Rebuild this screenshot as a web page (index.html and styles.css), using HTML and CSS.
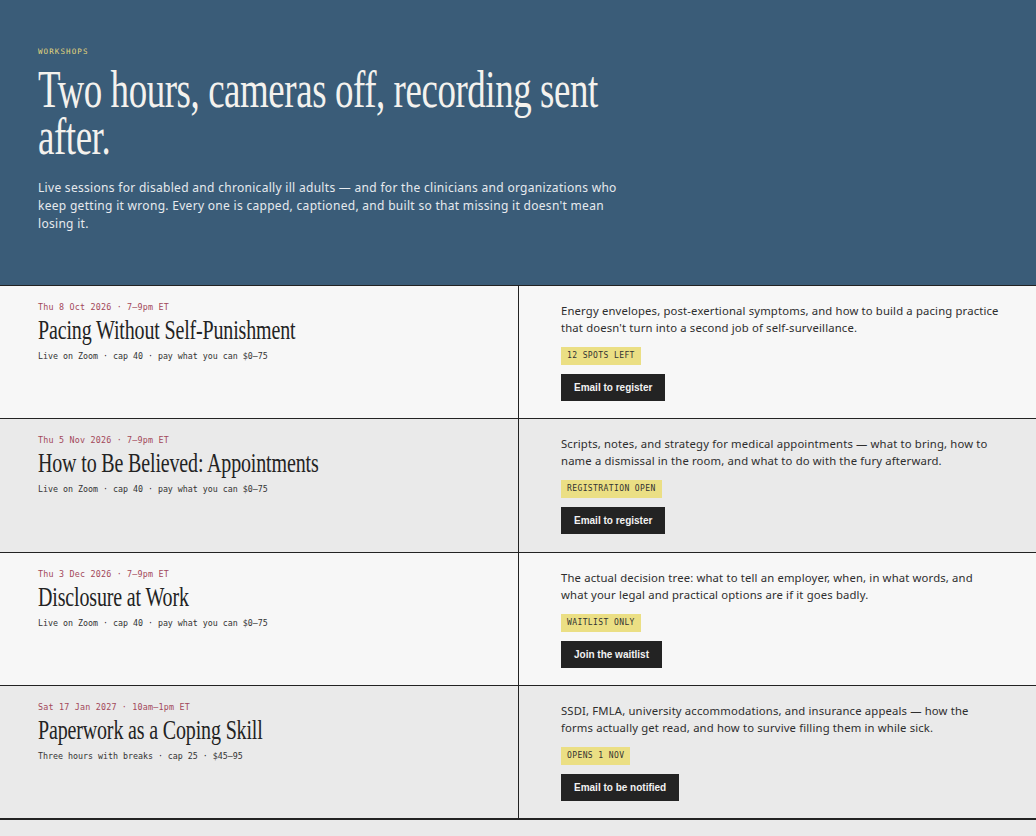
FILE: index.html
```html
<!DOCTYPE html>
<html lang="en">
<head>
<meta charset="utf-8">
<title>Workshops</title>
<link rel="stylesheet" href="styles.css">
</head>
<body>
<header class="hero">
  <div class="hero-inner">
    <p class="eyebrow">WORKSHOPS</p>
    <h1 class="hero-title">Two hours, cameras off, recording sent after.</h1>
    <p class="hero-lede">Live sessions for disabled and chronically ill adults — and for the clinicians and organizations who keep getting it wrong. Every one is capped, captioned, and built so that missing it doesn't mean losing it.</p>
  </div>
</header>
<main class="sessions">
  <article class="session session-light">
    <div class="session-main">
      <p class="session-date">Thu 8 Oct 2026 · 7–9pm ET</p>
      <h2 class="session-title">Pacing Without Self-Punishment</h2>
      <p class="session-meta">Live on Zoom · cap 40 · pay what you can $0–75</p>
    </div>
    <div class="session-detail">
      <p class="session-desc">Energy envelopes, post-exertional symptoms, and how to build a pacing practice that doesn't turn into a second job of self-surveillance.</p>
      <span class="badge">12 SPOTS LEFT</span>
      <a class="button" href="#">Email to register</a>
    </div>
  </article>
  <article class="session session-dark">
    <div class="session-main">
      <p class="session-date">Thu 5 Nov 2026 · 7–9pm ET</p>
      <h2 class="session-title">How to Be Believed: Appointments</h2>
      <p class="session-meta">Live on Zoom · cap 40 · pay what you can $0–75</p>
    </div>
    <div class="session-detail">
      <p class="session-desc">Scripts, notes, and strategy for medical appointments — what to bring, how to name a dismissal in the room, and what to do with the fury afterward.</p>
      <span class="badge">REGISTRATION OPEN</span>
      <a class="button" href="#">Email to register</a>
    </div>
  </article>
  <article class="session session-light">
    <div class="session-main">
      <p class="session-date">Thu 3 Dec 2026 · 7–9pm ET</p>
      <h2 class="session-title">Disclosure at Work</h2>
      <p class="session-meta">Live on Zoom · cap 40 · pay what you can $0–75</p>
    </div>
    <div class="session-detail">
      <p class="session-desc">The actual decision tree: what to tell an employer, when, in what words, and what your legal and practical options are if it goes badly.</p>
      <span class="badge">WAITLIST ONLY</span>
      <a class="button" href="#">Join the waitlist</a>
    </div>
  </article>
  <article class="session session-dark">
    <div class="session-main">
      <p class="session-date">Sat 17 Jan 2027 · 10am–1pm ET</p>
      <h2 class="session-title">Paperwork as a Coping Skill</h2>
      <p class="session-meta">Three hours with breaks · cap 25 · $45–95</p>
    </div>
    <div class="session-detail">
      <p class="session-desc">SSDI, FMLA, university accommodations, and insurance appeals — how the forms actually get read, and how to survive filling them in while sick.</p>
      <span class="badge">OPENS 1 NOV</span>
      <a class="button" href="#">Email to be notified</a>
    </div>
  </article>
</main>
</body>
</html>
```
FILE: styles.css
```css
* { box-sizing: border-box; }

html, body {
  margin: 0;
  padding: 0;
  background: #eaeaea;
  color: #232323;
  font-family: "Noto Sans", "Open Sans", sans-serif;
}

p, h1, h2 { margin: 0; }

.hero {
  background: #3a5c78;
  border-bottom: 1px solid #222;
  padding: 46px 38px 53px;
  height: 286px;
}

.hero-inner {
  width: 592px;
}

.eyebrow {
  font-family: "DejaVu Sans Mono", monospace;
  font-size: 7.5px;
  line-height: 12px;
  letter-spacing: 1.1px;
  color: #e2d67d;
}

.hero-title {
  margin-top: 9px;
  font-family: "Liberation Serif", serif;
  font-weight: 400;
  font-size: 52px;
  line-height: 46.8px;
  letter-spacing: -0.6px;
  color: #f4f2ee;
  width: 834px;
  transform: scaleX(0.71);
  transform-origin: left top;
}

.hero-lede {
  margin-top: 18px;
  font-size: 12px;
  line-height: 18px;
  letter-spacing: 0.3px;
  color: #e6eaee;
}

.sessions {
  border-bottom: 2px solid #232323;
}

.session {
  display: grid;
  grid-template-columns: 519px 1fr;
  border-bottom: 1px solid #232323;
}

.session:last-child { border-bottom: none; }

.session-light { background: #f7f7f7; }
.session-dark { background: #eaeaea; }

.session-main {
  border-right: 1px solid #232323;
  padding: 15px 38px;
}

.session-date {
  font-family: "DejaVu Sans Mono", monospace;
  font-size: 8.4px;
  line-height: 12px;
  letter-spacing: 0.2px;
  color: #a3485a;
}

.session-title {
  margin-top: 2px;
  font-family: "Liberation Serif", serif;
  font-weight: 400;
  font-size: 27px;
  line-height: 30px;
  letter-spacing: -0.2px;
  color: #232323;
  width: 600px;
  transform: scaleX(0.74);
  transform-origin: left top;
  white-space: nowrap;
}

.session-meta {
  margin-top: 5px;
  font-family: "DejaVu Sans Mono", monospace;
  font-size: 8.3px;
  line-height: 12px;
  color: #333;
}

.session-detail {
  padding: 16px 35px 17.3px 42px;
  display: flex;
  flex-direction: column;
  align-items: flex-start;
}

.session-desc {
  font-size: 11.3px;
  line-height: 17px;
  letter-spacing: 0.15px;
  color: #2e2e2e;
  margin-bottom: 11px;
}

.badge {
  display: inline-block;
  background: #ebdf84;
  color: #333;
  font-family: "DejaVu Sans Mono", monospace;
  font-size: 8px;
  line-height: 18px;
  height: 18px;
  letter-spacing: 0.4px;
  padding: 0 6px;
  margin-bottom: 9px;
}

.button {
  display: inline-block;
  background: #232323;
  color: #f2f2f2;
  text-decoration: none;
  font-family: "Liberation Sans", sans-serif;
  font-weight: 700;
  font-size: 10px;
  line-height: 27px;
  height: 27px;
  padding: 0 13px;
}
```
